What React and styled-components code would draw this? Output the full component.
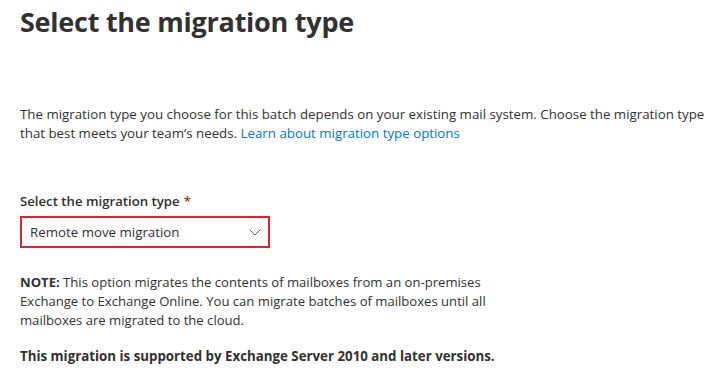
import React from "react";
import styled, { createGlobalStyle } from "styled-components";

const Global = createGlobalStyle`
  html, body { margin: 0; padding: 0; background: #ffffff; }
  body { font-family: "Open Sans", "Noto Sans", sans-serif; color: #323130; }
`;

const Page = styled.div`
  padding: 0 20px;
  display: flex;
  flex-direction: column;
`;

const Title = styled.h1`
  margin: 3px 0 0 0;
  font-size: 27px;
  line-height: 38px;
  font-weight: 700;
  letter-spacing: -0.25px;
  color: #323130;
`;

const Intro = styled.p`
  margin: 64px 0 0 0;
  font-size: 13.3px;
  line-height: 19px;
  white-space: nowrap;
`;

const Link = styled.a`
  color: #0078d4;
  text-decoration: none;
`;

const Field = styled.div`
  margin-top: 48px;
  display: flex;
  flex-direction: column;
  gap: 5px;
`;

const Label = styled.label`
  font-size: 13.2px;
  line-height: 20px;
  font-weight: 600;
  color: #323130;
`;

const Required = styled.span`
  color: #a4262c;
  margin-left: 4px;
`;

const Select = styled.div`
  width: 250px;
  height: 32px;
  box-sizing: border-box;
  border: 2px solid #e3202c;
  display: flex;
  align-items: center;
  justify-content: space-between;
  padding: 0 6px 0 8px;
  font-size: 13.3px;
  color: #323130;
`;

const Note = styled.p`
  margin: ${(p) => p.$top}px 0 0 0;
  font-size: ${(p) => (p.$bold ? 13.3 : 13.1)}px;
  line-height: 19px;
  white-space: nowrap;
  font-weight: ${(p) => (p.$bold ? 700 : 400)};
`;

export default function App() {
  return (
    <>
      <Global />
      <Page>
        <Title>Select the migration type</Title>
        <Intro>
          The migration type you choose for this batch depends on your existing mail system. Choose the migration type
          <br />
          that best meets your team’s needs. <Link href="#">Learn about migration type options</Link>
        </Intro>
        <Field>
          <Label>
            Select the migration type<Required>*</Required>
          </Label>
          <Select>
            <span>Remote move migration</span>
            <svg width="14" height="14" viewBox="0 0 14 14">
              <path d="M1.5 4.5 L7 10 L12.5 4.5" fill="none" stroke="#605e5c" strokeWidth="1" />
            </svg>
          </Select>
        </Field>
        <Note $top={25}>
          <b>NOTE:</b> This option migrates the contents of mailboxes from an on-premises
          <br />
          Exchange to Exchange Online. You can migrate batches of mailboxes until all
          <br />
          mailboxes are migrated to the cloud.
        </Note>
        <Note $top={17} $bold>
          This migration is supported by Exchange Server 2010 and later versions.
        </Note>
      </Page>
    </>
  );
}
